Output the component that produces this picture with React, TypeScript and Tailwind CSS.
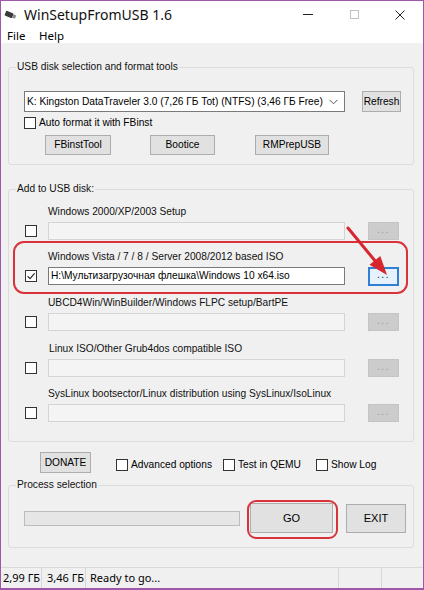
import React from "react";

function Check({ checked = false }: { checked?: boolean }) {
  return (
    <span className="flex h-[12px] w-[12px] shrink-0 items-center justify-center border border-[#333333] bg-white">
      {checked && (
        <svg width="10" height="10" viewBox="0 0 10 10">
          <path d="M1.6 5.1 L4 7.6 L8.6 2.3" fill="none" stroke="#222222" strokeWidth="1.1" />
        </svg>
      )}
    </span>
  );
}

function Btn({ children, className = "" }: { children: React.ReactNode; className?: string }) {
  return (
    <div className={"flex shrink-0 items-center justify-center border border-[#adadad] bg-[#e1e1e1] text-black " + className}>
      {children}
    </div>
  );
}

function IsoRow({
  label,
  value,
  active = false,
  labelIndent = "ml-[39px]",
  mt,
}: {
  label: string;
  value?: string;
  active?: boolean;
  labelIndent?: string;
  mt: string;
}) {
  return (
    <div className={"flex flex-col " + mt}>
      <div className={"h-[14px] leading-[14px] text-[#111111] " + labelIndent}>{label}</div>
      <div className="mt-[3px] flex h-[18px] items-center">
        <div className="ml-[16px]">
          <Check checked={active} />
        </div>
        <div
          className={
            "ml-[11px] flex h-[18px] w-[297px] items-center pl-[2px] " +
            (active ? "border border-[#7a7a7a] bg-white text-black" : "border border-[#d4d4d4] bg-[#f4f4f4]")
          }
        >
          {value}
        </div>
        {active ? (
          <div className="ml-[23px] flex h-[19px] w-[31px] items-center justify-center border-2 border-[#2f7fd6] bg-[#e5f1fb] pb-[3px] text-[#222222] tracking-[1.5px]">
            ...
          </div>
        ) : (
          <div className="ml-[23px] flex h-[18px] w-[31px] items-center justify-center border border-[#c4c4c4] bg-[#cccccc] pb-[3px] text-[#9a9a9a] tracking-[1.5px]">
            ...
          </div>
        )}
      </div>
    </div>
  );
}

export default function App() {
  return (
    <div className="relative flex h-[590px] w-[424px] flex-col overflow-hidden border border-b-2 border-[#9d58a9] bg-[#f0f0f0] font-['Liberation_Sans',Arial,sans-serif] text-[10.2px] text-black">
      {/* Title bar */}
      <div className="flex h-[27px] shrink-0 items-center bg-white">
        <div className="ml-[3px] w-[13px]">
          <svg width="13" height="10" viewBox="0 0 13 10">
            <g transform="rotate(22 6.5 5)">
              <rect x="1" y="2.4" width="8" height="5.2" rx="1" fill="#3b3b3b" />
              <rect x="9" y="3.3" width="3" height="3.4" fill="#8c8c8c" />
            </g>
          </svg>
        </div>
        <div className="ml-[7px] font-['Noto_Sans',sans-serif] text-[14px] leading-[20px] text-[#111111]">WinSetupFromUSB 1.6</div>
        <div className="ml-auto flex h-full">
          <div className="flex w-[46px] items-center justify-center">
            <div className="h-px w-[10px] bg-[#222222]" />
          </div>
          <div className="flex w-[46px] items-center justify-center">
            <div className="h-[9px] w-[9px] border border-[#c2c2c2]" />
          </div>
          <div className="flex w-[46px] items-center justify-center">
            <svg width="10" height="10" viewBox="0 0 10 10">
              <path d="M0.5 0.5 L9.5 9.5 M9.5 0.5 L0.5 9.5" stroke="#222222" strokeWidth="1" />
            </svg>
          </div>
        </div>
      </div>

      {/* Menu */}
      <div className="flex h-[15px] shrink-0 items-center bg-white font-['Noto_Sans',sans-serif] text-[11.5px] leading-[15px] text-black">
        <span className="ml-[6px] w-[32px]">File</span>
        <span>Help</span>
      </div>

      {/* Body */}
      <div className="flex flex-1 flex-col px-[7px]">
        {/* Group 1 */}
        <fieldset className="mt-[17px] w-[406px] rounded-[3px] border border-[#dcdcdc] pb-[9px]">
          <legend className="ml-[7px] px-[1px] leading-[14px] text-[#111111]">USB disk selection and format tools</legend>
          <div className="mt-[17px] flex items-center">
            <div className="ml-[15px] flex h-[21px] w-[321px] items-center border border-[#7a7a7a] bg-white pl-[2px]">
              <span className="flex-1 whitespace-nowrap">K: Kingston DataTraveler 3.0 (7,26 ГБ Tot) (NTFS) (3,46 ГБ Free)</span>
              <svg className="mr-[6px]" width="9" height="6" viewBox="0 0 9 6">
                <path d="M0.5 0.8 L4.5 4.8 L8.5 0.8" fill="none" stroke="#555555" strokeWidth="1" />
              </svg>
            </div>
            <Btn className="ml-[17px] h-[21px] w-[39px]">Refresh</Btn>
          </div>
          <div className="mt-[5px] flex items-center">
            <div className="ml-[15px]">
              <Check />
            </div>
            <span className="ml-[3px] leading-[12px]">Auto format it with FBinst</span>
          </div>
          <div className="mt-[6px] flex items-center">
            <Btn className="ml-[36px] h-[20px] w-[66px]">FBinstTool</Btn>
            <Btn className="ml-[39px] h-[20px] w-[65px]">Bootice</Btn>
            <Btn className="ml-[40px] h-[20px] w-[74px]">RMPrepUSB</Btn>
          </div>
        </fieldset>

        {/* Group 2 */}
        <fieldset className="mt-[17px] w-[406px] rounded-[3px] border border-[#dcdcdc] pb-[19px]">
          <legend className="ml-[7px] px-[1px] leading-[14px] text-[#111111]">Add to USB disk:</legend>
          <IsoRow mt="mt-[9px]" label="Windows 2000/XP/2003 Setup" />
          <IsoRow
            mt="mt-[10px]"
            label="Windows Vista / 7 / 8 / Server 2008/2012 based ISO"
            value="H:\Мультизагрузочная флешка\Windows 10 x64.iso"
            active
          />
          <IsoRow mt="mt-[11px]" label="UBCD4Win/WinBuilder/Windows FLPC setup/BartPE" />
          <IsoRow mt="mt-[11px]" label="Linux ISO/Other Grub4dos compatible ISO" labelIndent="ml-[40px]" />
          <IsoRow mt="mt-[10px]" label="SysLinux bootsector/Linux distribution using SysLinux/IsoLinux" />
        </fieldset>

        {/* Options row */}
        <div className="mt-[10px] flex items-start">
          <Btn className="ml-[32px] h-[21px] w-[51px]">DONATE</Btn>
          <div className="ml-[25px] mt-[7px] flex w-[107px] items-center">
            <Check />
            <span className="ml-[3px] leading-[12px]">Advanced options</span>
          </div>
          <div className="mt-[7px] flex w-[93px] items-center">
            <Check />
            <span className="ml-[3px] leading-[12px]">Test in QEMU</span>
          </div>
          <div className="mt-[7px] flex items-center">
            <Check />
            <span className="ml-[3px] leading-[12px]">Show Log</span>
          </div>
        </div>

        {/* Group 3 */}
        <fieldset className="mt-[5px] w-[406px] rounded-[3px] border border-[#dcdcdc] pb-[14px]">
          <legend className="ml-[7px] px-[1px] leading-[14px] text-[#111111]">Process selection</legend>
          <div className="mt-[11px] flex h-[30px] items-center">
            <div className="ml-[15px] h-[15px] w-[216px] border border-[#bcbcbc] bg-[#e6e6e6]" />
            <Btn className="ml-[10px] h-[30px] w-[83px] text-[11px]">GO</Btn>
            <Btn className="ml-[13px] h-[29px] w-[60px] text-[11px]">EXIT</Btn>
          </div>
        </fieldset>
      </div>

      {/* Status bar */}
      <div className="flex h-[21px] shrink-0 items-stretch border-t border-[#d9d9d9] bg-[#f0f0f0] font-['Noto_Sans',sans-serif] text-[11px] text-black">
        <div className="flex w-[41px] items-center border-r border-[#d7d7d7] pl-[2px] whitespace-nowrap">2,99 ГБ</div>
        <div className="flex w-[44px] items-center border-r border-[#d7d7d7] pl-[5px] whitespace-nowrap">3,46 ГБ</div>
        <div className="flex w-[253px] items-center border-r border-[#d7d7d7] pl-[4px] whitespace-nowrap">Ready to go...</div>
        <div className="w-[43px] border-r border-[#d7d7d7]" />
        <div className="flex-1" />
      </div>

      {/* Annotations */}
      <div className="pointer-events-none absolute left-[12px] top-[240px] h-[53px] w-[395px] rounded-[11px] border-2 border-[#d8333b]" />
      <div className="pointer-events-none absolute left-[246px] top-[499px] h-[39px] w-[91px] rounded-[9px] border-2 border-[#d8333b]" />
      <svg className="pointer-events-none absolute left-[-1px] top-[-1px]" width="424" height="590" viewBox="0 0 424 590">
        <line x1="348" y1="228" x2="376" y2="262" stroke="#d8262e" strokeWidth="3" strokeLinecap="round" />
        <polygon points="387,275 369.5,264.8 380.3,255.9" fill="#d8262e" />
      </svg>
    </div>
  );
}
